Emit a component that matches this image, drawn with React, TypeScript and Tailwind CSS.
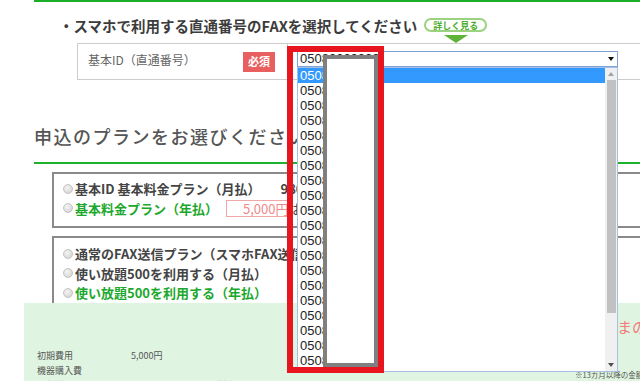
import React from "react";

function Radio() {
  return (
    <span className="mr-[2px] inline-block h-[10px] w-[10px] shrink-0 rounded-full border border-[#c4c4c4] bg-[radial-gradient(circle_at_40%_35%,#f4f4f4,#cfcfcf)]" />
  );
}

export default function App() {
  const options = Array.from({ length: 21 }, (_, i) => i);
  return (
    <div className="relative h-[381px] w-[640px] overflow-hidden bg-white font-['Noto_Sans_CJK_JP','Noto_Sans',sans-serif]">
      {/* top green rule */}
      <div className="ml-[34px] h-[2px] bg-[#19ad29]" />

      {/* heading 1 */}
      <div className="flex h-[41px] items-start pl-[59px]">
        <h2 className="mt-[14px] whitespace-nowrap text-[14.5px] font-bold leading-[20px] text-[#3c3c3c]">
          ・スマホで利用する直通番号のFAXを選択してください
        </h2>
        <div className="ml-[7px] mt-[16px] flex flex-col items-center">
          <span className="flex h-[14px] w-[63px] items-center justify-center rounded-full border-2 border-[#9ad27d] bg-white text-[9px] font-bold leading-none text-[#4dae2b]">
            詳しく見る
          </span>
          <span className="mt-[3px] h-0 w-0 border-x-[12.5px] border-t-[8px] border-x-transparent border-t-[#5db337]" />
        </div>
      </div>

      {/* form row */}
      <div className="mr-[-20px] ml-[77px] flex h-[37px] border-y border-l border-[#cccccc]">
        <div className="flex w-[210px] shrink-0 items-center justify-between border-r border-[#cccccc] pl-[10px] pr-[12px]">
          <span className="-mt-[3px] text-[12px] leading-[16px] text-[#666]">基本ID（直通番号）</span>
          <span className="flex h-[20px] w-[32px] items-center justify-center bg-[#e95f5f] text-[11px] font-bold text-white">
            必須
          </span>
        </div>
        <div className="pl-[9px] pt-[7px]">
          <div className="flex h-[16px] w-[321px] items-center justify-between border border-[#7da2d6] bg-white pl-[2px] pr-[3px] font-['Liberation_Sans',Arial,sans-serif] text-[13px] leading-[14px] text-[#222]">
            <span>05080000000</span>
            <svg width="6" height="4" viewBox="0 0 6 4">
              <path d="M0 0h6L3 4z" fill="#111" />
            </svg>
          </div>
        </div>
      </div>

      {/* heading 2 */}
      <div className="ml-[34px] mt-[44px] border-b-2 border-[#1db22c] pb-[14px]">
        <h2 className="whitespace-nowrap text-[18px] font-medium leading-[24px] tracking-[1.5px] text-[#555]">
          申込のプランをお選びください
        </h2>
      </div>

      {/* plan box 1 */}
      <div className="mr-[-20px] ml-[52px] mt-[8px] border-2 border-[#8a8a8a] pb-[8px] pl-[9px] pt-[5px] text-[13px] font-bold leading-[19.5px] text-[#444]">
        <div className="flex items-center whitespace-nowrap">
          <Radio />
          基本ID 基本料金プラン（月払）
          <span className="ml-[20px]">980円/月</span>
        </div>
        <div className="flex items-center whitespace-nowrap text-[#1ba82c]">
          <Radio />
          基本料金プラン（年払）
          <span className="ml-[8px] flex h-[17px] w-[64px] items-center border border-[#f2a7a7] pl-[16px] text-[13px] font-normal text-[#f08a8a]">
            5,000円
          </span>
          <span className="ml-[2px] font-normal text-[#444]">お得</span>
        </div>
      </div>

      {/* plan box 2 */}
      <div className="mr-[-20px] ml-[52px] mt-[8px] border-2 border-[#8a8a8a] pb-[8px] pl-[9px] pt-[6px] text-[13px] font-bold leading-[19.5px] text-[#444]">
        <div className="flex items-center whitespace-nowrap">
          <Radio />
          通常のFAX送信プラン（スマホFAX送信）
        </div>
        <div className="flex items-center whitespace-nowrap">
          <Radio />
          使い放題500を利用する（月払）
          <span className="ml-[35px]">月額500円</span>
        </div>
        <div className="flex items-center whitespace-nowrap text-[#1ba82c]">
          <Radio />
          使い放題500を利用する（年払）
          <span className="ml-[35px]">月額417円</span>
        </div>
        <div className="h-[40px]" />
      </div>

      {/* fixed price panel */}
      <div className="absolute bottom-0 left-[24px] right-0 top-[303px] bg-[#e0f5e1]">
        <div className="grid grid-cols-[94px_87px_auto] pl-[13px] pt-[45px] text-[9px] leading-[15px] text-[#555]">
          <span>初期費用</span>
          <span>5,000円</span>
          <span />
          <span>機器購入費</span>
          <span />
          <span />
          <span>月額基本料</span>
          <span />
          <span>基本料金</span>
        </div>
        <span className="absolute left-[593px] top-[14px] whitespace-nowrap text-[15px] leading-[20px] text-[#f27b7b]">
          まの料金
        </span>
        <span className="absolute left-[551px] top-[67px] whitespace-nowrap text-[7.5px] leading-[10px] text-[#555]">
          ※13カ月以降の金額
        </span>
      </div>

      {/* open dropdown list */}
      <div className="absolute left-[297px] top-[67px] flex h-[305px] w-[321px] overflow-hidden border border-[#a6bfe2] bg-white">
        <div className="w-[307px] shrink-0 font-['Liberation_Sans',Arial,sans-serif] text-[13px] text-[#222]">
          {options.map((i) => (
            <div
              key={i}
              className={
                i === 0
                  ? "h-[15px] bg-[#3399ff] pl-[2px] leading-[15px] text-white"
                  : "h-[15px] pl-[2px] leading-[15px]"
              }
            >
              {"0508" + String(1000000 + i * 137).slice(1)}
            </div>
          ))}
        </div>
        <div className="flex flex-1 flex-col items-center bg-[#f0f0f0]">
          <div className="flex h-[12px] items-center justify-center">
            <svg width="6" height="4" viewBox="0 0 6 4">
              <path d="M0 4h6L3 0z" fill="#a3a3a3" />
            </svg>
          </div>
          <div className="h-[233px] w-[9px] bg-[#c1c1c1]" />
          <div className="flex-1" />
          <div className="flex h-[12px] items-center justify-center">
            <svg width="6" height="4" viewBox="0 0 6 4">
              <path d="M0 0h6L3 4z" fill="#505050" />
            </svg>
          </div>
        </div>
      </div>

      {/* annotation: red frame */}
      <div className="absolute left-[287px] top-[46px] h-[327px] w-[97px] border-[6px] border-[#e8151f]" />
      {/* annotation: masking box */}
      <div className="absolute left-[323px] top-[55px] h-[312px] w-[55px] border-[4px] border-[#7f7f7f] bg-white" />
    </div>
  );
}
